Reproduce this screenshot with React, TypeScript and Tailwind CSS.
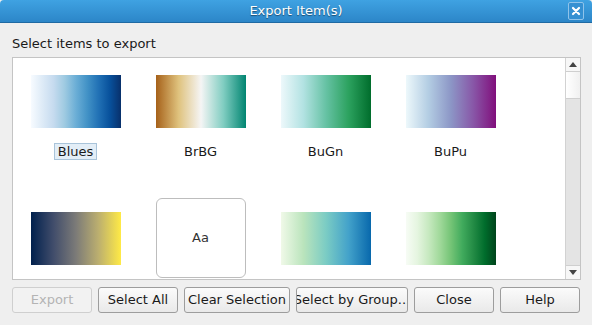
import React from 'react'

const font = { fontFamily: '"DejaVu Sans", "Liberation Sans", sans-serif' }

const items = [
  { name: 'Blues', bg: 'bg-[linear-gradient(to_right,#f7fbff,#deebf7,#c6dbef,#9ecae1,#6baed6,#4292c6,#2171b5,#08519c,#08306b)]', selected: true },
  { name: 'BrBG', bg: 'bg-[linear-gradient(to_right,#a6611a,#dfc27d,#f5f5f5,#80cdc1,#018571)]' },
  { name: 'BuGn', bg: 'bg-[linear-gradient(to_right,#edf8fb,#b2e2e2,#66c2a4,#2ca25f,#006d2c)]' },
  { name: 'BuPu', bg: 'bg-[linear-gradient(to_right,#edf8fb,#b3cde3,#8c96c6,#8856a7,#810f7c)]' },
  { name: 'Cividis', bg: 'bg-[linear-gradient(to_right,#00204d,#414d6b,#7c7b78,#bcaf6f,#ffea46)]' },
  { name: 'Font', font: true },
  { name: 'GnBu', bg: 'bg-[linear-gradient(to_right,#f0f9e8,#bae4bc,#7bccc4,#43a2ca,#0868ac)]' },
  { name: 'Greens', bg: 'bg-[linear-gradient(to_right,#f7fcf5,#e5f5e0,#c7e9c0,#a1d99b,#74c476,#41ab5d,#238b45,#006d2c,#00441b)]' },
]

const buttons = [
  { label: 'Export', w: 'w-[80px]', disabled: true },
  { label: 'Select All', w: 'w-[80px]' },
  { label: 'Clear Selection', w: 'w-[106px]' },
  { label: 'Select by Group...', w: 'w-[112px]' },
  { label: 'Close', w: 'w-[80px]' },
  { label: 'Help', w: 'w-[80px]' },
]

export default function App() {
  return (
    <div className="w-[592px] h-[325px] bg-[#efefef] flex flex-col overflow-hidden text-[13px] text-[#1a1a1a]" style={font}>
      {/* title bar */}
      <div className="h-[23px] shrink-0 rounded-t-[4px] bg-[linear-gradient(#3fa2e2,#2c86c8)] border-b border-[#1f6aa3] flex items-center relative">
        <div className="flex-1 text-center text-white text-[13px] [text-shadow:0_1px_1px_rgba(0,0,0,0.45)]">Export Item(s)</div>
        <div className="absolute right-[8px] top-[2px] w-[16px] h-[18px] rounded-[2px] border border-[#8fc3ea] bg-[#3590d2] flex items-center justify-center">
          <svg width="10" height="10" viewBox="0 0 10 10">
            <path d="M2 2 L8 8 M8 2 L2 8" stroke="white" strokeWidth="2.2" strokeLinecap="round" />
          </svg>
        </div>
      </div>

      <div className="shrink-0 pl-[12px] pt-[13px] h-[34px] leading-[16px]">Select items to export</div>

      {/* list */}
      <div className="shrink-0 ml-[12px] w-[569px] h-[223px] border border-[#c4c4c4] bg-white flex overflow-hidden">
        <div className="flex-1 grid grid-cols-[repeat(4,125px)] auto-rows-[137px] content-start pt-[3px]">
          {items.map((it) => (
            <div key={it.name} className="w-[125px] flex flex-col items-center">
              <div className="h-[80px] w-[90px] shrink-0 flex items-center justify-center">
                {it.font ? (
                  <div className="w-[90px] h-[80px] rounded-[6px] border border-[#bdbdbd] flex items-center justify-center text-[13px] text-[#333]">Aa</div>
                ) : (
                  <div className={`w-[90px] h-[53px] ${it.bg}`} />
                )}
              </div>
              <div className={`mt-[2px] h-[17px] px-[3px] leading-[15px] border ${it.selected ? 'border-[#a9c4da] bg-[#e3eef7]' : 'border-transparent'}`}>
                {it.name}
              </div>
            </div>
          ))}
        </div>
        {/* scrollbar */}
        <div className="w-[15px] border-l border-[#d2d2d2] flex flex-col bg-[#e4e4e4]">
          <div className="h-[13px] bg-[#f7f7f7] flex items-center justify-center">
            <svg width="8" height="5" viewBox="0 0 8 5"><path d="M0 5 L4 0 L8 5 Z" fill="#444" /></svg>
          </div>
          <div className="h-[28px] border-y border-[#cfcfcf] bg-[linear-gradient(to_right,#ffffff,#f0f0f0)]" />
          <div className="flex-1" />
          <div className="h-[14px] border-t border-[#cfcfcf] bg-[#f7f7f7] flex items-center justify-center">
            <svg width="8" height="5" viewBox="0 0 8 5"><path d="M0 0 L4 5 L8 0 Z" fill="#444" /></svg>
          </div>
        </div>
      </div>

      {/* buttons */}
      <div className="shrink-0 flex gap-[6px] pl-[12px] pt-[7px]">
        {buttons.map((b) => (
          <div
            key={b.label}
            className={`${b.w} h-[26px] rounded-[3px] border flex items-center justify-center overflow-hidden whitespace-nowrap ${
              b.disabled
                ? 'border-[#cfcfcf] bg-[#f2f2f2] text-[#b4b4b4]'
                : 'border-[#9d9d9d] bg-[linear-gradient(#fbfbfb,#e9e9e9)] text-[#1a1a1a]'
            }`}
          >
            <span className="shrink-0">{b.label}</span>
          </div>
        ))}
      </div>
    </div>
  )
}
